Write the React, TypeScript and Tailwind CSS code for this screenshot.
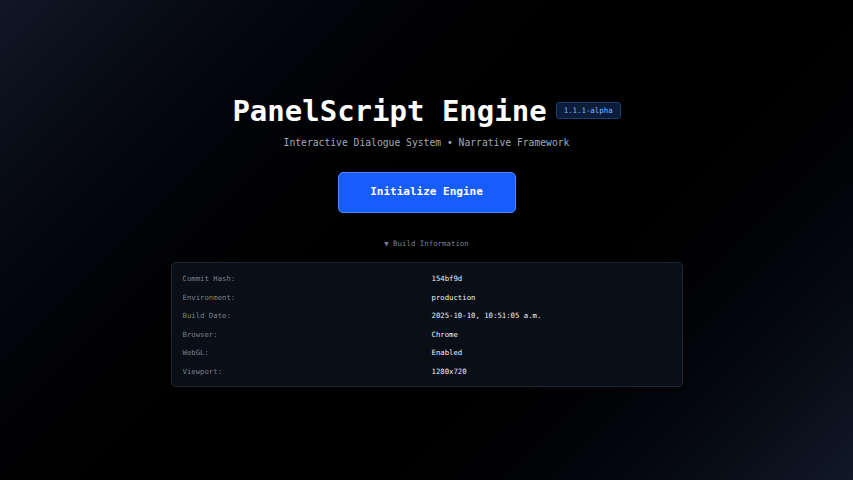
import React from 'react';

const buildInfo = [
    { label: 'Commit Hash:', value: '154bf9d' },
    { label: 'Environment:', value: 'production' },
    { label: 'Build Date:', value: '2025-10-10, 10:51:05 a.m.' },
    { label: 'Browser:', value: 'Chrome' },
    { label: 'WebGL:', value: 'Enabled' },
    { label: 'Viewport:', value: '1280x720' },
];

const App: React.FC = () => {
    return (
        <div className="min-h-screen w-full flex flex-col items-center justify-center bg-linear-135 from-[#111726] via-black via-55% to-[#111827] font-['DejaVu_Sans_Mono',monospace]">
            {/* Title */}
            <div className="flex items-center h-[36px]">
                <h1 className="text-[29px] leading-[36px] font-bold text-white">PanelScript Engine</h1>
                <span className="ml-[9px] mt-[-1px] px-[7px] h-[17px] flex items-center rounded-[3px] border border-[#1d3d72] bg-[#0b1d3b] text-[7.4px] text-[#86b6ff]">
                    1.1.1-alpha
                </span>
            </div>
            <p className="mt-[7px] text-[9.7px] leading-[14px] text-[#a3a9b4]">
                Interactive Dialogue System • Narrative Framework
            </p>

            {/* Action */}
            <button className="mt-[22px] w-[178px] h-[41px] rounded-[5px] border border-[#4d88ff] bg-[#175dfd] text-white text-[11px] font-bold">
                Initialize Engine
            </button>

            <div className="mt-[24px] text-[7.4px] leading-[14px] text-[#7a808c]">▼ Build Information</div>

            {/* Build info card */}
            <div className="mt-[11px] w-[512px] h-[125px] rounded-[5px] border border-[#1e2532] bg-[#0a0e16] px-[11px] py-[10px]">
                <div className="grid grid-cols-2 gap-x-[10px] gap-y-[7.6px]">
                    {buildInfo.map((row) => (
                        <React.Fragment key={row.label}>
                            <div className="text-[7.3px] leading-[11px] text-[#7a808c]">{row.label}</div>
                            <div className="text-[7.3px] leading-[11px] text-[#eef0f3]">{row.value}</div>
                        </React.Fragment>
                    ))}
                </div>
            </div>
        </div>
    );
};

export default App;
